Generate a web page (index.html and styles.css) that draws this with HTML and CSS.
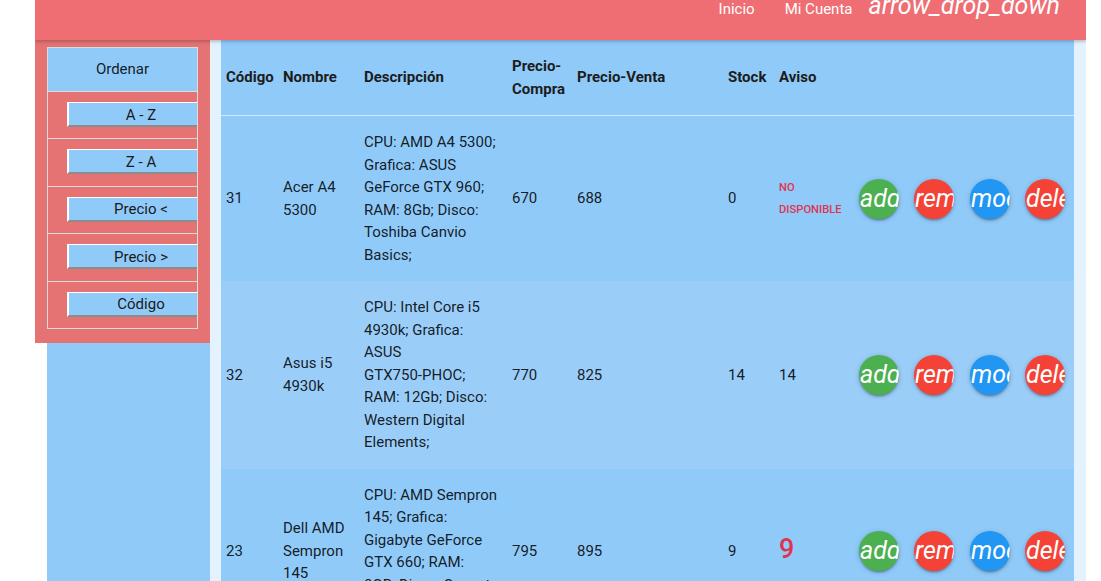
FILE: index.html
```html
<!DOCTYPE html>
<html lang="es">
<head>
<meta charset="utf-8">
<title>Productos</title>
<link rel="stylesheet" href="styles.css">
</head>
<body>
<div class="page">
  <nav class="nav">
    <ul class="nav-links">
      <li class="nav-item">Inicio</li>
      <li class="nav-item nav-account">Mi Cuenta</li>
      <li class="nav-item nav-icon">arrow_drop_down</li>
    </ul>
  </nav>
  <div class="layout">
    <aside class="side">
      <div class="side-box">
        <div class="panel">
          <div class="panel-head">Ordenar</div>
          <div class="panel-row"><button class="sort-btn">A - Z</button></div>
          <div class="panel-row"><button class="sort-btn">Z - A</button></div>
          <div class="panel-row"><button class="sort-btn">Precio &lt;</button></div>
          <div class="panel-row"><button class="sort-btn">Precio &gt;</button></div>
          <div class="panel-row"><button class="sort-btn">Código</button></div>
        </div>
      </div>
      <div class="side-fill"></div>
    </aside>
    <main class="main">
      <table class="products">
        <colgroup>
          <col class="c-cod"><col class="c-nom"><col class="c-desc"><col class="c-pc"><col class="c-pv"><col class="c-stock"><col class="c-aviso"><col class="c-a1"><col class="c-a2"><col class="c-a3"><col class="c-a4">
        </colgroup>
        <thead>
          <tr>
            <th>Código</th><th>Nombre</th><th>Descripción</th><th>Precio-Compra</th><th>Precio-Venta</th><th>Stock</th><th>Aviso</th><th></th><th></th><th></th><th></th>
          </tr>
        </thead>
        <tbody>
          <tr class="row-a">
            <td>31</td><td>Acer A4 5300</td>
            <td>CPU: AMD A4 5300; Grafica: ASUS GeForce GTX 960; RAM: 8Gb; Disco: Toshiba Canvio Basics;</td>
            <td>670</td><td>688</td><td>0</td>
            <td><span class="warn">NO DISPONIBLE</span></td>
            <td><span class="fab green"><i>add</i></span></td>
            <td><span class="fab red"><i>remove</i></span></td>
            <td><span class="fab blue"><i>mode_edit</i></span></td>
            <td><span class="fab red"><i>delete</i></span></td>
          </tr>
          <tr class="row-b">
            <td>32</td><td>Asus i5 4930k</td>
            <td>CPU: Intel Core i5 4930k; Grafica: ASUS <span class="nowrap">GTX750-PHOC;</span> RAM: 12Gb; Disco: Western Digital Elements;</td>
            <td>770</td><td>825</td><td>14</td>
            <td>14</td>
            <td><span class="fab green"><i>add</i></span></td>
            <td><span class="fab red"><i>remove</i></span></td>
            <td><span class="fab blue"><i>mode_edit</i></span></td>
            <td><span class="fab red"><i>delete</i></span></td>
          </tr>
          <tr class="row-a">
            <td>23</td><td>Dell AMD Sempron 145</td>
            <td>CPU: AMD Sempron 145; Grafica: Gigabyte GeForce GTX 660; RAM: <span class="nowrap">8GB; Disco:</span> Seagate Barracuda;</td>
            <td>795</td><td>895</td><td>9</td>
            <td><span class="low">9</span></td>
            <td><span class="fab green"><i>add</i></span></td>
            <td><span class="fab red"><i>remove</i></span></td>
            <td><span class="fab blue"><i>mode_edit</i></span></td>
            <td><span class="fab red"><i>delete</i></span></td>
          </tr>
        </tbody>
      </table>
    </main>
  </div>
</div>
</body>
</html>
```

FILE: styles.css
```css
html, body {
  margin: 0;
  padding: 0;
  background: #ffffff;
  font-family: Roboto, "Liberation Sans", sans-serif;
  font-size: 15px;
  line-height: 1.5;
  color: rgba(0, 0, 0, 0.87);
}

.page {
  margin-left: 35px;
  width: 1051px;
  height: 581px;
  overflow: hidden;
  display: flex;
  flex-direction: column;
}

.nav {
  position: relative;
  z-index: 2;
  height: 40px;
  flex: none;
  background: #ee6e73;
  box-shadow: 0 2px 2px 0 rgba(0,0,0,0.10), 0 1px 5px 0 rgba(0,0,0,0.14);
  overflow: hidden;
}

.nav-links {
  list-style: none;
  margin: -7px 0 0 0;
  padding: 0 26px 0 0;
  display: flex;
  justify-content: flex-end;
  align-items: baseline;
  color: #ffffff;
}

.nav-item {
  font-size: 15px;
  line-height: 1;
}

.nav-account {
  margin-left: 30px;
}

.nav-icon {
  margin-left: 16px;
  font-size: 25px;
  font-style: italic;
}

.layout {
  flex: 1;
  display: flex;
  min-height: 0;
}

.side {
  width: 175px;
  flex: none;
  display: flex;
  flex-direction: column;
}

.side-box {
  background: #e57373;
  padding: 7px 12px 14px 12px;
}

.panel {
  border: 1px solid #dcdcdc;
  overflow: hidden;
}

.panel-head {
  height: 43px;
  line-height: 43px;
  text-align: center;
  background: #90caf9;
  font-size: 15px;
  color: rgba(0, 0, 0, 0.87);
}

.panel-row {
  border-top: 1px solid #dcdcdc;
  padding: 10px 0 11.4px 19px;
  white-space: nowrap;
}

.sort-btn {
  display: block;
  width: 148px;
  height: 25px;
  margin: 0;
  padding: 1px 0 0 0;
  background: #90caf9;
  border-top: 1px solid #ffffff;
  border-left: 2px solid #ffffff;
  border-bottom: 2px solid #8c8c8c;
  border-right: 2px solid #8c8c8c;
  font-family: Roboto, "Liberation Sans", sans-serif;
  font-size: 15px;
  line-height: 20px;
  color: #1a1a1a;
  text-align: center;
}

.side-fill {
  flex: 1;
  margin-left: 12px;
  background: #90caf9;
}

.main {
  flex: 1;
  background: #e3f2fd;
  padding: 0 12px 0 11px;
  min-width: 0;
}

.products {
  width: 853px;
  table-layout: fixed;
  border-collapse: collapse;
  background: #90caf9;
}

.c-cod { width: 57px; }
.c-nom { width: 81px; }
.c-desc { width: 148px; }
.c-pc { width: 65px; }
.c-pv { width: 151px; }
.c-stock { width: 51px; }
.c-aviso { width: 80px; }
.c-a1 { width: 55px; }
.c-a2 { width: 56px; }
.c-a3 { width: 55px; }
.c-a4 { width: 54px; }

.products th,
.products td {
  padding: 15px 5px;
  text-align: left;
  vertical-align: middle;
  line-height: 22.5px;
  font-size: 15px;
}

.products th {
  font-weight: 700;
  color: #1c1c1c;
}

.products thead tr {
  border-bottom: 1px solid rgba(255, 255, 255, 0.35);
}

.nowrap {
  white-space: nowrap;
}

.row-a { background: #90caf9; }
.row-b { background: #9acdf8; }

.warn {
  display: block;
  font-size: 11.2px;
  font-weight: 500;
  color: #e0334f;
  line-height: 22.5px;
  padding-top: 1px;
}

.low {
  font-size: 27px;
  font-weight: 500;
  color: #e0334f;
}

.fab {
  display: block;
  width: 40px;
  height: 40px;
  border-radius: 50%;
  overflow: hidden;
  box-shadow: 0 2px 2px 0 rgba(0,0,0,0.14), 0 3px 1px -2px rgba(0,0,0,0.12), 0 1px 5px 0 rgba(0,0,0,0.2);
  color: #ffffff;
}

.fab i {
  display: block;
  width: 40px;
  font-size: 25px;
  line-height: 40px;
  white-space: nowrap;
  text-align: left;
  padding-left: 1px;
}

.green { background: #4caf50; }
.red { background: #f44336; }
.blue { background: #2196f3; }
```
